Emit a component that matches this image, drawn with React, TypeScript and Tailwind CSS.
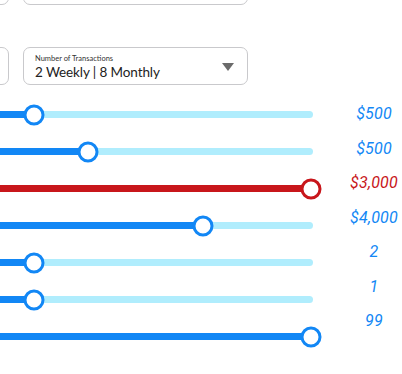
type SliderRow = { pos: number; tone: 'blue' | 'red'; full?: boolean };

const sliders: SliderRow[] = [
  { pos: 34, tone: 'blue' },
  { pos: 88, tone: 'blue' },
  { pos: 311, tone: 'red', full: true },
  { pos: 203, tone: 'blue' },
  { pos: 34, tone: 'blue' },
  { pos: 34, tone: 'blue' },
  { pos: 311, tone: 'blue', full: true },
];

const values: { text: string; tone: 'blue' | 'red' }[] = [
  { text: '$500', tone: 'blue' },
  { text: '$500', tone: 'blue' },
  { text: '$3,000', tone: 'red' },
  { text: '$4,000', tone: 'blue' },
  { text: '2', tone: 'blue' },
  { text: '1', tone: 'blue' },
  { text: '99', tone: 'blue' },
];

function Slider({ pos, tone, full }: SliderRow) {
  const red = tone === 'red';
  return (
    <div className="relative h-[37px] flex items-center">
      <div className={`h-[7px] w-full rounded-full ${red ? 'bg-[#c8161b]' : 'bg-[#b0edfd]'}`}>
        <div
          className={`h-full rounded-full ${red ? 'bg-[#c8161b]' : 'bg-[#1287f5]'}`}
          style={{ width: full ? '100%' : pos + 10 }}
        />
      </div>
      <div
        className={`absolute top-1/2 h-[21px] w-[21px] -translate-x-1/2 -translate-y-1/2 rounded-full border-[3px] bg-white ${
          red ? 'border-[#c8161b]' : 'border-[#1287f5]'
        }`}
        style={{ left: pos + 10 }}
      />
    </div>
  );
}

export default function App() {
  return (
    <div className="w-[402px] h-[374px] overflow-hidden bg-white font-['Lato',sans-serif] text-[#222]">
      {/* top row, mostly scrolled away */}
      <div className="flex gap-[14px] -mt-[33px]">
        <div className="-ml-[40px] h-[38px] w-[49px] shrink-0 rounded-[7px] border-[1.5px] border-[#c9c9cc]" />
        <div className="h-[38px] w-[225px] shrink-0 rounded-[7px] border-[1.5px] border-[#c9c9cc]" />
      </div>

      <div className="flex gap-[14px] mt-[42px]">
        <div className="-ml-[40px] h-[38px] w-[49px] shrink-0 rounded-[7px] border-[1.5px] border-[#c9c9cc]" />
        <div className="relative h-[38px] w-[225px] shrink-0 rounded-[7px] border-[1.5px] border-[#c9c9cc] pl-[11px] pt-[6px]">
          <div className="text-[7.5px] leading-[9px] text-[#333]">Number of Transactions</div>
          <div className="text-[13.5px] leading-[16px] mt-[1px] tracking-[-0.1px]">2 Weekly | 8 Monthly</div>
          <svg
            className="absolute right-[13px] top-[15px]"
            width="12"
            height="8"
            viewBox="0 0 12 8"
          >
            <path d="M0 0h12L6 8z" fill="#6b6b6b" />
          </svg>
        </div>
      </div>

      <div className="flex mt-[11px]">
        <div className="-ml-[10px] w-[323px] shrink-0">
          {sliders.map((s, i) => (
            <Slider key={i} {...s} />
          ))}
        </div>
        <div className="flex-1 mt-[1px] pl-[33px]">
          {values.map((v, i) => (
            <div
              key={i}
              className={`h-[34.5px] flex items-center justify-center italic font-['Roboto',sans-serif] text-[16px] tracking-[0.2px] ${
                v.tone === 'red' ? 'text-[#c8161b]' : 'text-[#1287f5]'
              }`}
            >
              {v.text}
            </div>
          ))}
        </div>
      </div>
    </div>
  );
}
